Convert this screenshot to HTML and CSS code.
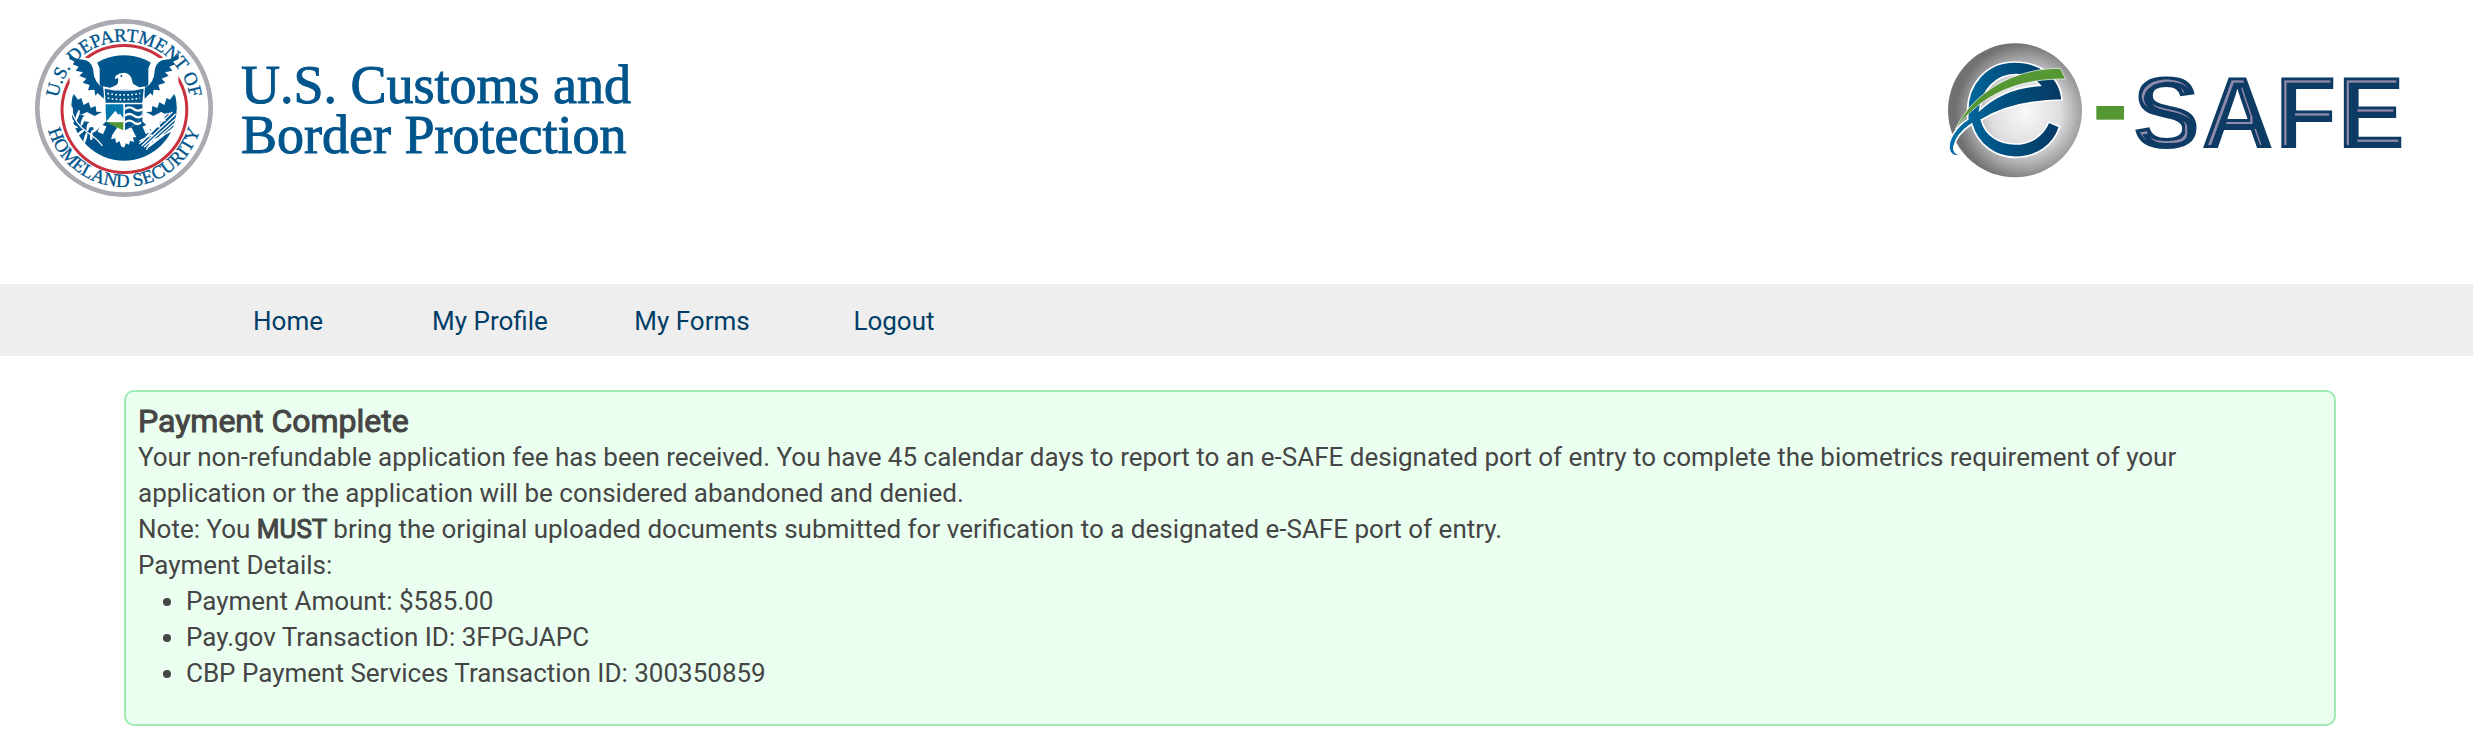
FILE: index.html
```html
<!DOCTYPE html>
<html lang="en">
<head>
    <meta charset="UTF-8">
    <meta name="viewport" content="width=device-width, initial-scale=1.0">
    <title>e-SAFE | Payment Complete</title>
    <link rel="stylesheet" href="styles.css">
</head>
<body>
    <header class="site-header">
        <div class="agency">
            <svg class="seal" viewBox="44 28 534 534" role="img" aria-label="Department of Homeland Security seal">
                <defs>
                    <path id="topArc" d="M111 295a200 200 0 0 1 400 0"/>
                    <path id="bottomArc" d="M74 295a237 237 0 0 0 474 0"/>
                </defs>
                <circle cx="311" cy="295" r="260" fill="#fff" stroke="#a9abb0" stroke-width="14"/>

                <!-- red ring, open where the wings cross it -->
                <path d="M190 152A187 187 0 0 1 433 153M470 201A187 187 0 1 1 157 197" fill="none" stroke="#c8313e" stroke-width="9"/>
                <circle cx="311" cy="295" r="158" fill="#00558c"/>

                <!-- wings -->
                <path d="M147 126L196 144L226 148L238 176L238 225L256 240L258 335L224 366L218 352L201 354L207 337L185 334L193 318L172 312L181 295L158 282L166 270L148 240Z" fill="#fff"/>
                <path d="M475 126L426 144L396 148L384 176L384 225L368 240L366 335L398 366L404 352L421 354L415 337L437 334L429 318L450 312L441 295L464 282L456 270L474 240Z" fill="#fff"/>
                <path d="M147 133Q162 149 188 150Q211 151 218 177Q220 222 252 236L250 267L232 250L225 258L222 240L203 242L208 226L187 219L198 207L177 198L188 188L166 183L175 171L157 164L164 156L147 148Z" fill="#00558c"/>
                <path d="M475 133Q460 149 434 150Q411 151 404 177Q402 222 372 236L373 267L390 250L397 258L400 240L419 242L414 226L435 219L424 207L445 198L434 188L456 183L447 171L465 164L458 156L475 148Z" fill="#00558c"/>
                <path d="M160 252L173 270L183 265L190 286L205 278L211 295L226 289L228 306L245 307L223 319L200 307L182 315L160 295L153 300ZM462 252L449 270L439 265L432 286L417 278L411 295L396 289L394 306L377 307L399 319L422 307L440 315L462 295L469 300Z" fill="#00558c"/>

                <!-- head and tail -->
                <path d="M262 238L288 226Q296 219 293 205L283 209L286 198Q298 189 311 189Q327 190 333 204L338 222L365 238Z" fill="#fff"/>
                <circle cx="303" cy="199" r="3" fill="#00558c"/>
                <path d="M290 355L276 375L272 389L285 386L287 400L298 395L302 409L311 414L317 401L326 405L329 393L341 397L338 383L348 383L334 355Z" fill="#fff"/>
                <path d="M250 347L240 370M375 347L384 370" stroke="#fff" stroke-width="18"/>

                <!-- shield -->
                <path d="M248 230Q310 248 374 230L368 285Q372 335 311 366Q249 336 254 285Z" fill="#fff"/>
                <path d="M253 237Q311 250 370 237L366 279H256Z" fill="#00558c"/>
                <path d="M261 251Q311 261 360 251M262 265Q311 275 359 265" fill="none" stroke="#fff" stroke-width="5" stroke-dasharray="5 7"/>
                <path d="M256 284H309V338H260Q254 312 256 284Z" fill="#0077ad"/>
                <path d="M257 337L285 303L294 315L299 312L310 327V338Z" fill="#fff"/>
                <path d="M260 338H309V362Q277 349 260 338Z" fill="#539632"/>
                <path d="M314 284H366Q371 338 314 362Z" fill="#00558c"/>
                <path d="M314 298q13-10 26 0t27 0M314 318q13-10 26 0t27 0M314 338q13-10 26 0t22 0" fill="none" stroke="#fff" stroke-width="7"/>

                <!-- olive branch -->
                <path d="M152 299Q166 344 200 367T246 409" fill="none" stroke="#fff" stroke-width="4"/>
                <g fill="#fff">
                    <ellipse cx="153" cy="305" rx="5" ry="15"/>
                    <ellipse cx="172" cy="316" rx="4" ry="16" transform="rotate(18 172 316)"/>
                    <ellipse cx="150" cy="329" rx="4" ry="14" transform="rotate(-55 150 329)"/>
                    <ellipse cx="187" cy="334" rx="4" ry="15" transform="rotate(18 187 334)"/>
                    <ellipse cx="159" cy="349" rx="4" ry="15" transform="rotate(-68 159 349)"/>
                    <ellipse cx="203" cy="352" rx="4" ry="13" transform="rotate(10 203 352)"/>
                    <ellipse cx="178" cy="371" rx="4" ry="17" transform="rotate(50 178 371)"/>
                    <ellipse cx="195" cy="386" rx="4" ry="17" transform="rotate(16 195 386)"/>
                    <ellipse cx="213" cy="380" rx="4" ry="12"/>
                    <ellipse cx="222" cy="362" rx="4" ry="12" transform="rotate(55 222 362)"/>
                </g>

                <!-- arrows -->
                <path d="M357 402L456 307M364 409L466 313M371 413L474 320M379 415L477 329M386 411L478 340M365 397L441 310M372 390L428 323M389 397L480 350M357 394L395 375M402 382L378 421" fill="none" stroke="#fff" stroke-width="4"/>

                <text class="seal-text"><textPath href="#topArc" startOffset="50%" text-anchor="middle">U.S. DEPARTMENT OF</textPath></text>
                <text class="seal-text"><textPath href="#bottomArc" startOffset="50%" text-anchor="middle">HOMELAND SECURITY</textPath></text>
            </svg>
            <div class="agency-name">U.S. Customs and<br>Border Protection</div>
        </div>

        <svg class="esafe-logo" viewBox="53 39 1374 405" role="img" aria-label="e-SAFE">
            <defs>
                <radialGradient id="ball" cx="0.58" cy="0.52" r="0.58">
                    <stop offset="0" stop-color="#f8f8f9"/>
                    <stop offset="0.45" stop-color="#dedee0"/>
                    <stop offset="0.72" stop-color="#a0a0a3"/>
                    <stop offset="0.9" stop-color="#717174"/>
                </radialGradient>
                <linearGradient id="blue">
                    <stop offset="0" stop-color="#0071a8"/>
                    <stop offset="0.5" stop-color="#005080"/>
                    <stop offset="1" stop-color="#083863"/>
                </linearGradient>
                <!-- light line just inside the letter edges -->
                <filter id="bevel" x="-5%" y="-5%" width="110%" height="110%">
                    <feMorphology in="SourceAlpha" operator="erode" radius="8" result="inner"/>
                    <feOffset in="inner" dx="7" dy="7" result="shifted"/>
                    <feComposite in="inner" in2="shifted" operator="out" result="edge"/>
                    <feGaussianBlur in="edge" stdDeviation="2" result="soft"/>
                    <feFlood flood-color="#8d8bae"/>
                    <feComposite in2="soft" operator="in" result="line"/>
                    <feMerge>
                        <feMergeNode in="SourceGraphic"/>
                        <feMergeNode in="line"/>
                    </feMerge>
                </filter>
            </defs>
            <circle cx="254" cy="241" r="201" fill="url(#ball)"/>
            <path d="M395 210C391 140 328 96 252 96C170 96 108 162 112 252L112 268C80 288 50 330 57 360C61 378 80 381 97 374C78 374 68 366 71 350C76 322 95 302 124 282C142 345 195 382 255 382C320 382 370 345 388 290L355 276C338 318 300 342 255 342C205 342 165 315 153 270C220 228 300 212 395 210ZM148 240C155 178 200 134 255 134C285 134 312 146 329 166C260 170 200 192 148 240Z" fill="url(#blue)" fill-rule="evenodd" stroke="#fff" stroke-width="5"/>
            <path d="M75 297C130 185 250 115 390 115L406 147C270 145 155 190 75 297Z" fill="#559733" stroke="#fff" stroke-width="2"/>
            <path d="M498 228h83v41h-83z" fill="#559733"/>
            <text class="esafe-text" x="606" y="353" filter="url(#bevel)">SAFE</text>
        </svg>
    </header>

    <nav class="main-nav">
        <a href="#">Home</a>
        <a href="#">My Profile</a>
        <a href="#">My Forms</a>
        <a href="#">Logout</a>
    </nav>

    <main class="content">
        <section class="alert-success">
            <h1>Payment Complete</h1>
            <p>Your non-refundable application fee has been received. You have 45 calendar days to report to an e-SAFE designated port of entry to complete the biometrics requirement of your application or the application will be considered abandoned and denied.</p>
            <p>Note: You <strong>MUST</strong> bring the original uploaded documents submitted for verification to a designated e-SAFE port of entry.</p>
            <p>Payment Details:</p>
            <ul>
                <li>Payment Amount: $585.00</li>
                <li>Pay.gov Transaction ID: 3FPGJAPC</li>
                <li>CBP Payment Services Transaction ID: 300350859</li>
            </ul>
        </section>
    </main>
</body>
</html>
```
FILE: styles.css
```css
* {
    box-sizing: border-box;
}
body {
    margin: 0;
    background: #fff;
    color: #454545;
    font-family: Roboto, "Liberation Sans", sans-serif;
    font-size: 26px;
    line-height: 36px;
}
.site-header {
    display: flex;
    justify-content: space-between;
    align-items: flex-start;
    padding: 19px 67px 87px 35px;
}
.agency {
    display: flex;
    align-items: center;
    gap: 28px;
}
.seal {
    width: 178px;
    height: 178px;
}
.seal-text {
    font-family: "Liberation Serif", serif;
    font-size: 56px;
    fill: #00558c;
    stroke: #00558c;
    stroke-width: 1px;
}
.agency-name {
    padding-top: 4px;
    color: #00558c;
    font-family: "Liberation Serif", serif;
    font-size: 54px;
    line-height: 50px;
    -webkit-text-stroke: 1px #00558c;
}
.esafe-logo {
    width: 458px;
    height: 135px;
    margin-top: 24px;
}
.esafe-text {
    font-family: "Liberation Sans", sans-serif;
    font-size: 307px;
    font-weight: bold;
    fill: #0b3a63;
}
.main-nav {
    display: flex;
    padding: 19px 187px 17px;
    background: #eee;
}
.main-nav a {
    width: 202px;
    color: #003e67;
    text-align: center;
    text-decoration: none;
}
.main-nav a:hover {
    text-decoration: underline;
}
.content {
    padding: 34px 137px 27px 124px;
}
.alert-success {
    padding: 11px 36px 12px 12px;
    background: #ebfff0;
    border: 2px solid #9eebb4;
    border-radius: 10px;
}
.alert-success h1 {
    margin: 0;
    font-size: 32px;
    font-weight: 400;
    line-height: 36px;
    -webkit-text-stroke: 1px currentColor;
}
.alert-success p {
    margin: 0;
}
.alert-success strong {
    font-weight: 400;
    -webkit-text-stroke: 1px currentColor;
}
.alert-success ul {
    margin: 0 0 21px;
    padding-left: 48px;
}
```
